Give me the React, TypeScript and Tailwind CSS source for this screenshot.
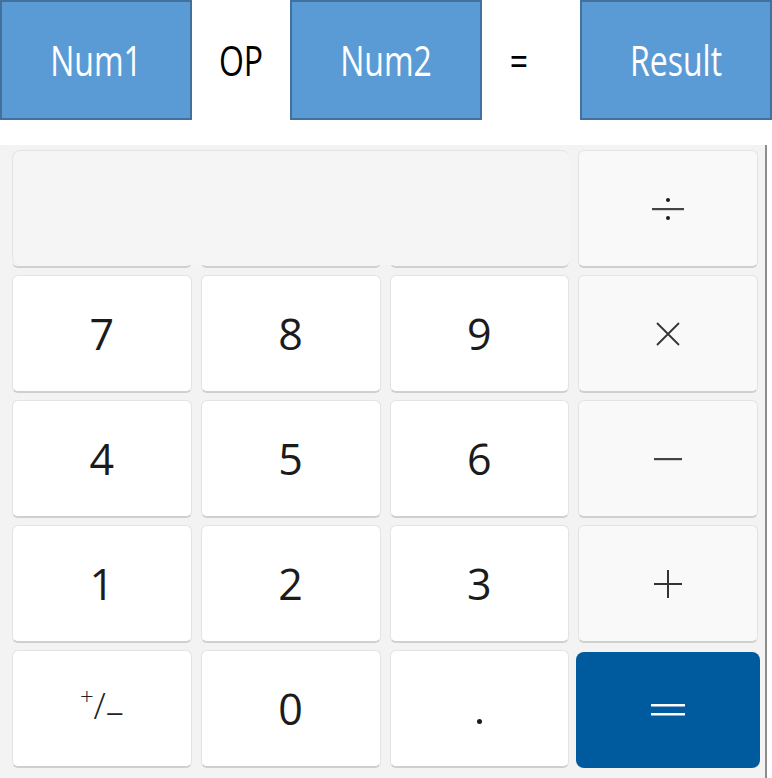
import React from "react";

const keyBase =
  "flex items-center justify-center rounded-[6px] border border-[#e3e3e3] border-b-[2px] border-b-[#cfcfcf] text-[#1b1b1b]";
const numKey = `${keyBase} bg-white`;
const opKey = `${keyBase} bg-[#f9f9f9]`;

function Box({ label }: { label: string }) {
  return (
    <div className="w-[192px] h-[120px] shrink-0 bg-[#5b9bd5] border-2 border-[#41719c] flex items-center justify-center">
      <span className="text-white text-[32px] leading-none scale-y-[1.3] [font-family:'Open_Sans',sans-serif]">
        {label}
      </span>
    </div>
  );
}

function Sym({ label, extra }: { label: string; extra?: string }) {
  return (
    <div className={`w-[98px] h-[120px] shrink-0 flex items-center justify-center ${extra ?? ""}`}>
      <span className="text-black text-[32px] leading-none scale-y-[1.3] [font-family:'Open_Sans',sans-serif]">
        {label}
      </span>
    </div>
  );
}

function Digit({ d }: { d: string }) {
  return (
    <div className={numKey}>
      <span className="text-[43px] leading-none [font-family:'Open_Sans',sans-serif] font-normal">{d}</span>
    </div>
  );
}

function DivIcon() {
  return (
    <svg width="34" height="26" viewBox="0 0 34 26">
      <circle cx="17" cy="4" r="2" fill="#1b1b1b" />
      <rect x="1" y="12" width="32" height="2.2" fill="#444" />
      <circle cx="17" cy="22" r="2" fill="#1b1b1b" />
    </svg>
  );
}
function TimesIcon() {
  return (
    <svg width="26" height="26" viewBox="0 0 26 26">
      <path d="M2 2 L24 24 M24 2 L2 24" stroke="#333" strokeWidth="1.8" />
    </svg>
  );
}
function MinusIcon() {
  return (
    <svg width="28" height="4" viewBox="0 0 28 4">
      <rect x="0" y="1" width="28" height="2.2" fill="#444" />
    </svg>
  );
}
function PlusIcon() {
  return (
    <svg width="28" height="28" viewBox="0 0 28 28">
      <path d="M0 14 H28 M14 0 V28" stroke="#333" strokeWidth="2" />
    </svg>
  );
}
function EqIcon() {
  return (
    <svg width="34" height="16" viewBox="0 0 34 16">
      <rect x="0" y="2" width="34" height="2.5" fill="#fff" />
      <rect x="0" y="11" width="34" height="2.5" fill="#fff" />
    </svg>
  );
}

export default function App() {
  return (
    <div className="w-[772px] h-[778px] bg-white overflow-hidden flex flex-col">
      <div className="flex h-[120px]">
        <Box label="Num1" />
        <Sym label="OP" />
        <Box label="Num2" />
        <Sym label="=" extra="pr-[24px]" />
        <Box label="Result" />
      </div>
      <div className="h-[25px]" />
      <div className="w-[767px] flex-1 bg-[#f3f3f3] border-r-2 border-[#8c8c8c] pt-[5px] pl-[12px] pr-[7px]">
        <div className="grid grid-cols-4 grid-rows-[repeat(5,118px)] gap-x-[9px] gap-y-[7px]">
          <div className="col-span-3 relative">
            <div className="grid grid-cols-3 gap-x-[9px] h-full">
              <div className="rounded-[6px] bg-[#f5f5f5] border-b-[2px] border-[#d0d0d0]" />
              <div className="rounded-[6px] bg-[#f5f5f5] border-b-[2px] border-[#d0d0d0]" />
              <div className="rounded-[6px] bg-[#f5f5f5] border-b-[2px] border-[#d0d0d0]" />
            </div>
            <div className="absolute left-0 top-0 right-0 bottom-[3px] rounded-[8px] bg-[#f5f5f5] border-l border-t border-[#e3e3e3]" />
          </div>
          <div className={opKey}>
            <DivIcon />
          </div>

          <Digit d="7" />
          <Digit d="8" />
          <Digit d="9" />
          <div className={opKey}>
            <TimesIcon />
          </div>

          <Digit d="4" />
          <Digit d="5" />
          <Digit d="6" />
          <div className={opKey}>
            <MinusIcon />
          </div>

          <Digit d="1" />
          <Digit d="2" />
          <Digit d="3" />
          <div className={opKey}>
            <PlusIcon />
          </div>

          <div className={numKey}>
            <span className="text-[36px] leading-none [font-family:'Open_Sans',sans-serif] font-light flex items-start text-[#222]">
              <span className="text-[24px] leading-none -mt-[4px]">+</span>
              <span className="leading-none">/</span>
              <span className="leading-none mt-[5px]">–</span>
            </span>
          </div>
          <Digit d="0" />
          <div className={`${numKey} items-end pb-[42px]`}>
            <span className="w-[5px] h-[5px] rounded-full bg-[#1b1b1b]" />
          </div>
          <div className="rounded-[8px] bg-[#005a9e] flex items-center justify-center -mx-[2px] mt-[2px]">
            <EqIcon />
          </div>
        </div>
      </div>
    </div>
  );
}
